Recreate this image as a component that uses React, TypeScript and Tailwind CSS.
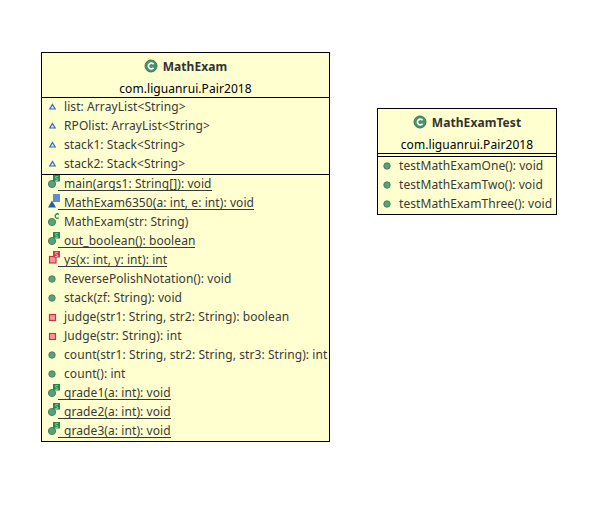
import React from "react";

type IconKind = "field" | "method" | "private" | "static" | "staticPrivate" | "ctor" | "staticCtor";

interface Member {
  label: string;
  icon: IconKind;
  underline?: boolean;
}

const fields: Member[] = [
  { label: "list: ArrayList<String>", icon: "field" },
  { label: "RPOlist: ArrayList<String>", icon: "field" },
  { label: "stack1: Stack<String>", icon: "field" },
  { label: "stack2: Stack<String>", icon: "field" },
];

const methods: Member[] = [
  { label: "main(args1: String[]): void", icon: "static", underline: true },
  { label: "MathExam6350(a: int, e: int): void", icon: "staticCtor", underline: true },
  { label: "MathExam(str: String)", icon: "ctor" },
  { label: "out_boolean(): boolean", icon: "static", underline: true },
  { label: "ys(x: int, y: int): int", icon: "staticPrivate", underline: true },
  { label: "ReversePolishNotation(): void", icon: "method" },
  { label: "stack(zf: String): void", icon: "method" },
  { label: "judge(str1: String, str2: String): boolean", icon: "private" },
  { label: "Judge(str: String): int", icon: "private" },
  { label: "count(str1: String, str2: String, str3: String): int", icon: "method" },
  { label: "count(): int", icon: "method" },
  { label: "grade1(a: int): void", icon: "static", underline: true },
  { label: "grade2(a: int): void", icon: "static", underline: true },
  { label: "grade3(a: int): void", icon: "static", underline: true },
];

const testMethods: Member[] = [
  { label: "testMathExamOne(): void", icon: "method" },
  { label: "testMathExamTwo(): void", icon: "method" },
  { label: "testMathExamThree(): void", icon: "method" },
];

const Dot = ({ r = 3.2 }: { r?: number }) => (
  <circle cx="5" cy="9" r={r} fill="#5c9f7b" stroke="#3f8560" strokeWidth="1" />
);

// little square with a letter, top right of the member icon
const Badge = ({ bg, color }: { bg: string; color: string }) => (
  <>
    <rect x="6" y="0" width="7" height="6.5" fill={bg} />
    <text x="9.5" y="6" textAnchor="middle" fontSize="7" fontWeight="700" fill={color}>
      S
    </text>
  </>
);

const MemberIcon = ({ kind }: { kind: IconKind }) => (
  <svg width="17" height="19" viewBox="0 0 17 19" className="shrink-0">
    {kind === "field" && (
      <path d="M5.5 6.5 L8.2 11 L2.8 11 Z" fill="#e4ecf8" stroke="#2f6db5" strokeWidth="1.2" />
    )}
    {kind === "method" && <Dot />}
    {kind === "private" && (
      <rect x="2.5" y="6.5" width="6" height="6" fill="#f09a9a" stroke="#c8324a" strokeWidth="1.2" />
    )}
    {kind === "static" && (
      <>
        <Dot r={3.6} />
        <Badge bg="#1f8a4c" color="#7fc89a" />
      </>
    )}
    {kind === "ctor" && (
      <>
        <Dot r={3.6} />
        <path d="M11.8 1.4 A2.2 2.2 0 1 0 11.8 4.8" fill="none" stroke="#1f8a4c" strokeWidth="1.3" />
      </>
    )}
    {kind === "staticPrivate" && (
      <>
        <rect x="2.5" y="5.5" width="6.5" height="6.5" fill="#f09a9a" stroke="#c8324a" strokeWidth="1.2" />
        <Badge bg="#d8344a" color="#f5a8b0" />
      </>
    )}
    {kind === "staticCtor" && (
      <>
        <path d="M5 6.5 L9 13.5 L1 13.5 Z" fill="#2460a8" />
        <rect x="6" y="0" width="7" height="8" fill="#5b8fd0" />
      </>
    )}
  </svg>
);

const ClassIcon = () => (
  <svg width="14" height="14" viewBox="0 0 14 14" className="mt-[-3px] shrink-0">
    <circle cx="7" cy="7" r="6" fill="#4a9068" stroke="#357a55" strokeWidth="1" />
    <path d="M9.6 5.2 A2.9 2.9 0 1 0 9.6 8.8" fill="none" stroke="#ffffff" strokeWidth="1.7" />
  </svg>
);

const Row = ({ member, inset }: { member: Member; inset: string }) => (
  <div className={`flex h-[19px] ${inset} leading-[17px] whitespace-pre text-[#3a3a3a]`}>
    <MemberIcon kind={member.icon} />
    {member.underline ? (
      <span className="ml-[-6px] h-[16px] border-b border-[#3a3a3a] pl-[6px]">{member.label}</span>
    ) : (
      <span>{member.label}</span>
    )}
  </div>
);

const ClassBox = ({
  name,
  left,
  top,
  width,
  inset,
  sections,
}: {
  name: string;
  left: string;
  top: string;
  width: string;
  inset: string;
  sections: Member[][];
}) => (
  <div className={`absolute ${left} ${top} ${width} border border-black bg-[#ffffcf]`}>
    <div className="flex h-[44px] flex-col items-center pt-[4px]">
      <div className="flex h-[20px] items-center gap-[5px] font-bold text-[#333]">
        <ClassIcon />
        <span>{name}</span>
      </div>
      <div className="mt-[3px] leading-[17px] text-black">com.liguanrui.Pair2018</div>
    </div>
    {sections.map((rows, i) => (
      <div key={i} className="min-h-[3px] border-t border-black">
        {rows.map((m) => (
          <Row key={m.label} member={m} inset={inset} />
        ))}
      </div>
    ))}
  </div>
);

export default function App() {
  return (
    <div className="relative h-[529px] w-[602px] bg-white font-['Noto_Sans',sans-serif] text-[12px] tracking-[0.08px]">
      <ClassBox
        name="MathExam"
        left="left-[41px]"
        top="top-[52px]"
        width="w-[289px]"
        inset="pl-[5px]"
        sections={[fields, methods]}
      />
      <ClassBox
        name="MathExamTest"
        left="left-[377px]"
        top="top-[108px]"
        width="w-[180px]"
        inset="pl-[4px]"
        sections={[[], testMethods]}
      />
    </div>
  );
}
